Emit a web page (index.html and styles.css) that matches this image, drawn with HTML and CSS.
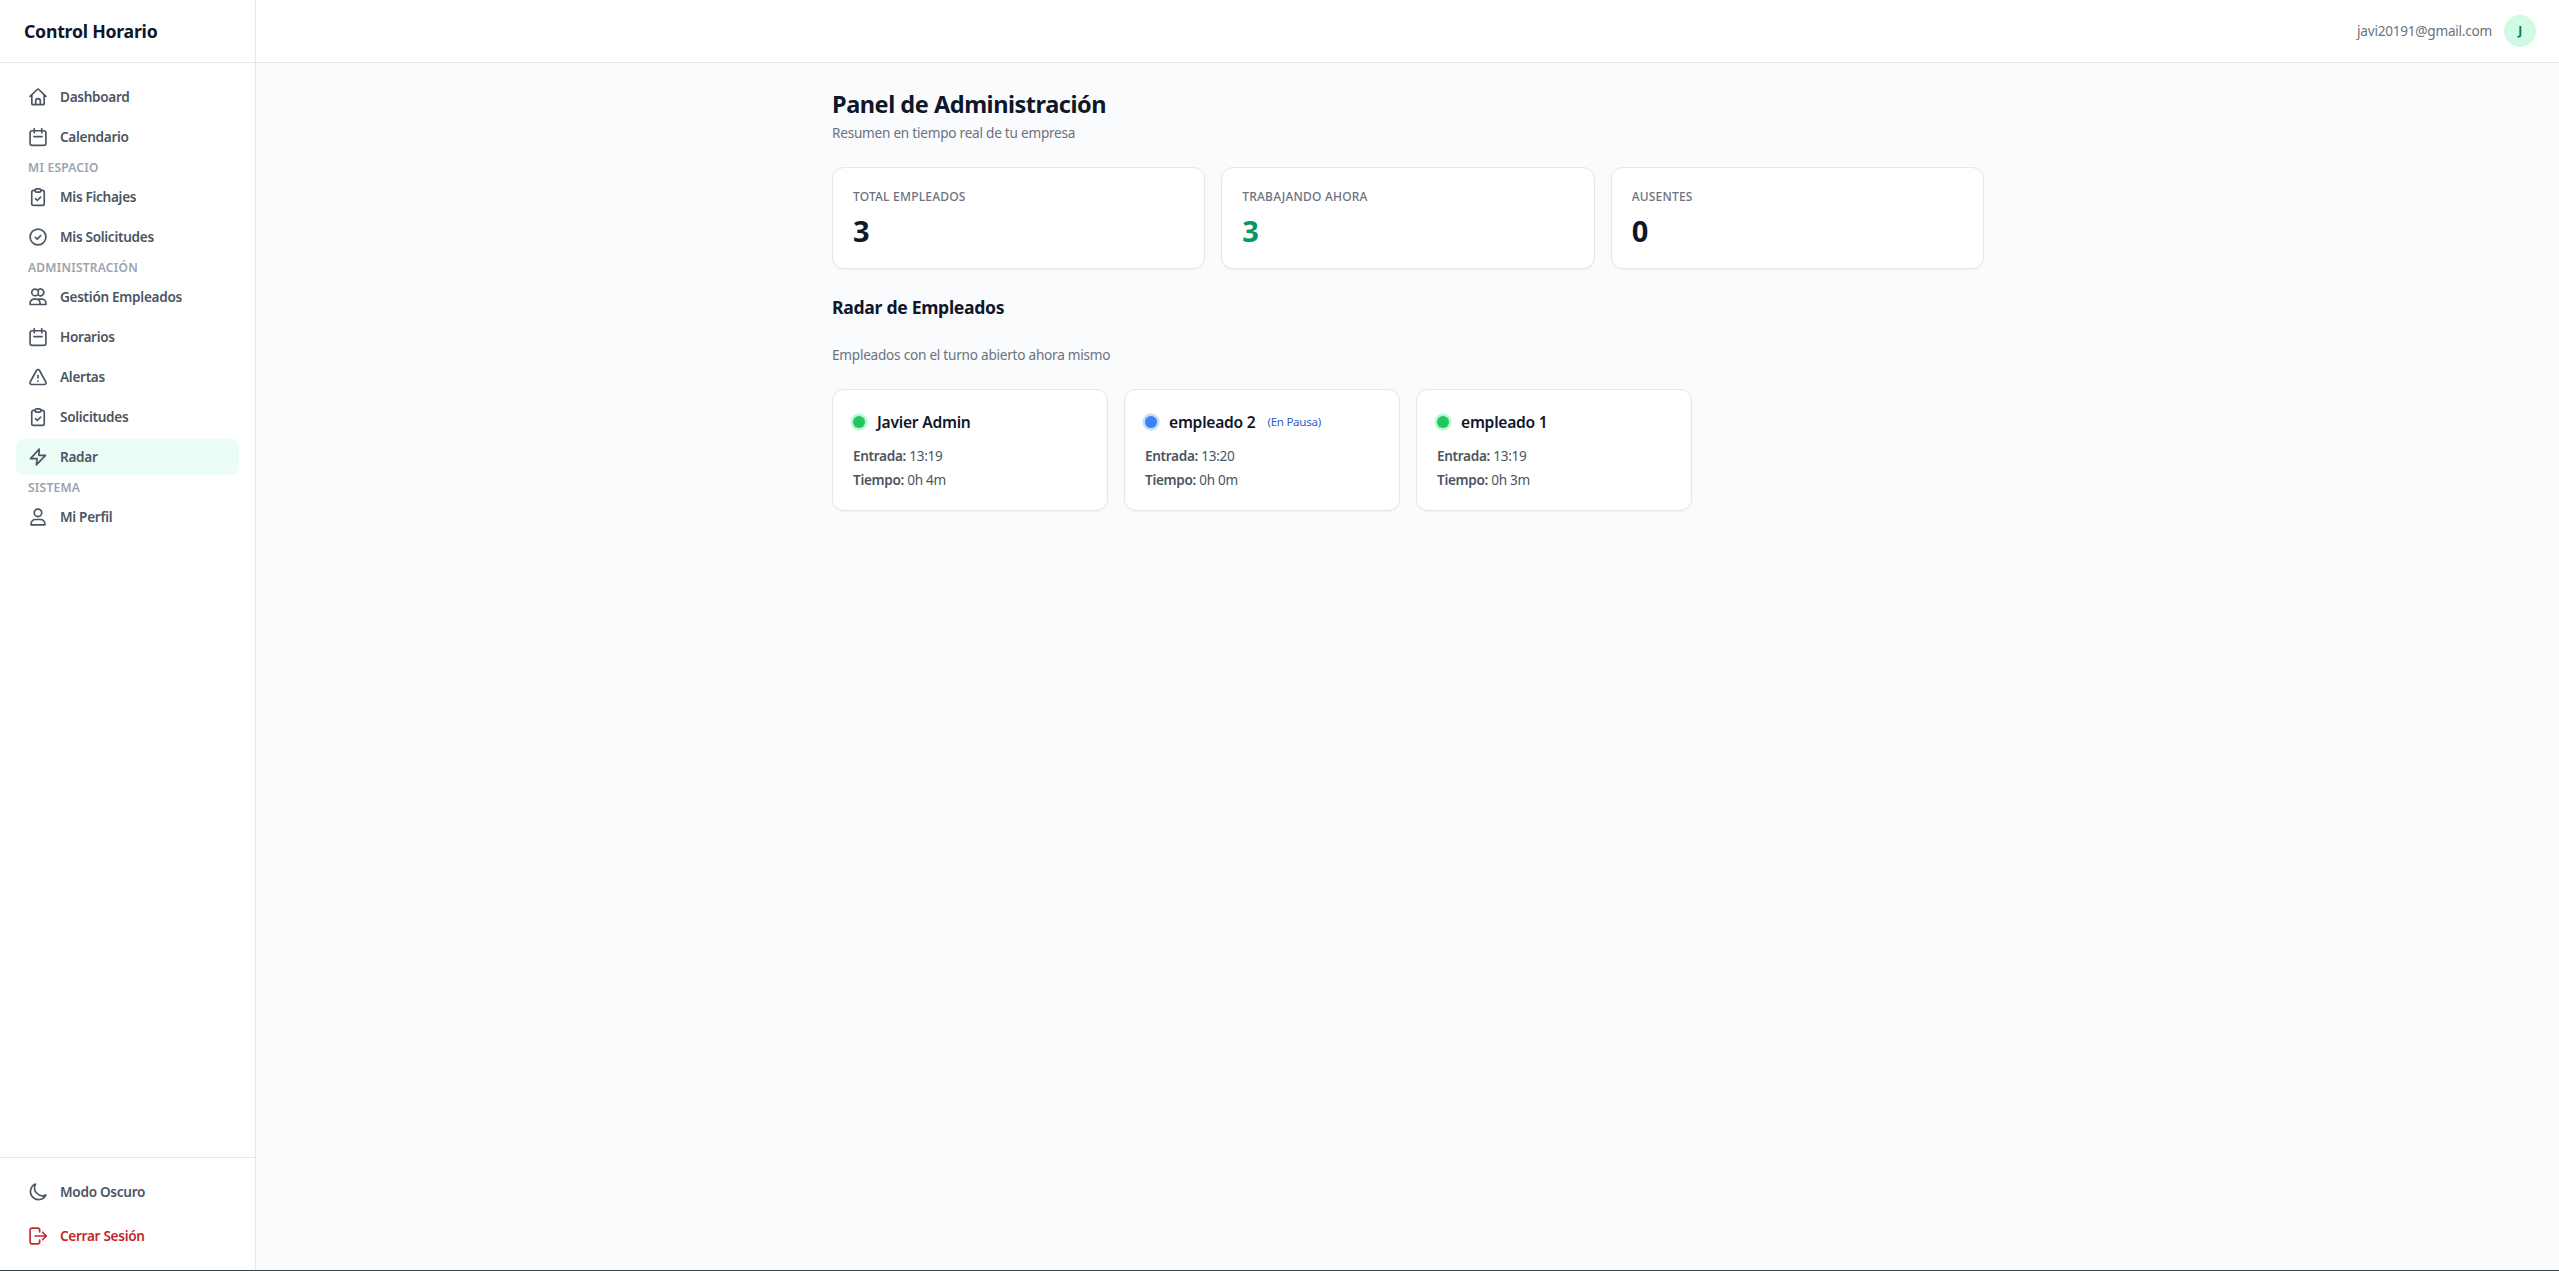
FILE: index.html
```html
<!DOCTYPE html>
<html lang="es">
<head>
  <meta charset="UTF-8">
  <meta name="viewport" content="width=device-width, initial-scale=1.0">
  <title>Control Horario</title>
  <link rel="stylesheet" href="styles.css">
</head>
<body>
  <!-- iconos compartidos -->
  <svg class="sprite" aria-hidden="true">
    <symbol id="i-home" viewBox="0 0 24 24"><path d="M2.5 11.2 11 3a1.5 1.5 0 0 1 2 0l8.500 8.200M4.600 9.500V20a1.200 1.200 0 0 0 1.200 1.200h12.400a1.200 1.200 0 0 0 1.200-1.200V9.500M9.200 21v-4.200a2.800 2.800 0 0 1 5.600 0V21"/></symbol>
    <symbol id="i-calendar" viewBox="0 0 24 24"><rect x="2.500" y="4.500" width="19" height="17.500" rx="2.500"/><path d="M7.500 2v5M16.500 2v5M7 11.500h10"/></symbol>
    <symbol id="i-clipboard" viewBox="0 0 24 24"><path d="M8.500 4H6.500a2 2 0 0 0-2 2v14a2 2 0 0 0 2 2h11a2 2 0 0 0 2-2V6a2 2 0 0 0-2-2h-2M9 14l2.200 2.200 4-4"/><rect x="8.500" y="2.200" width="7" height="4" rx="2"/></symbol>
    <symbol id="i-check" viewBox="0 0 24 24"><circle cx="12" cy="12" r="9.500"/><path d="m8.800 12.300 2.200 2.200 4.200-4.200"/></symbol>
    <symbol id="i-users" viewBox="0 0 24 24"><circle cx="8.500" cy="6.500" r="4"/><path d="M12.500 3.300a4 4 0 1 1 0 6.400M2.500 21v-1.500a5 5 0 0 1 5-5h2a5 5 0 0 1 5 5V21zM12.500 14.500h4a5 5 0 0 1 5 5V21h-7"/></symbol>
    <symbol id="i-alert" viewBox="0 0 24 24"><path d="M10.300 3.900 2.600 18a2 2 0 0 0 1.800 3h15.200a2 2 0 0 0 1.800-3L13.700 3.900a2 2 0 0 0-3.400 0zM12 10v3.200M12 16.800v.2"/></symbol>
    <symbol id="i-bolt" viewBox="0 0 24 24"><path d="M13.500 2.500 3 14h8l-1 7.500L21 10h-8z"/></symbol>
    <symbol id="i-user" viewBox="0 0 24 24"><circle cx="12" cy="7" r="4.500"/><path d="M3.800 21.500V20a5 5 0 0 1 5-5h6.400a5 5 0 0 1 5 5v1.500z"/></symbol>
    <symbol id="i-moon" viewBox="0 0 24 24"><path d="M21.500 15.500A9.700 9.700 0 1 1 9 2.500a9.500 9.500 0 0 0 12.500 13z"/></symbol>
    <symbol id="i-logout" viewBox="0 0 24 24"><path d="M14 7V5a2.500 2.500 0 0 0-2.500-2.500H5A2.500 2.500 0 0 0 2.500 5v14A2.500 2.500 0 0 0 5 21.500h6.500A2.500 2.500 0 0 0 14 19v-2M8.500 12h13M17.500 7.500 22 12l-4.500 4.500"/></symbol>
  </svg>

  <div class="app">
    <aside class="sidebar">
      <div class="brand">Control Horario</div>
      <nav class="nav">
        <a href="#" class="nav-item"><svg class="icon"><use href="#i-home"/></svg><span>Dashboard</span></a>
        <a href="#" class="nav-item"><svg class="icon"><use href="#i-calendar"/></svg><span>Calendario</span></a>
        <p class="nav-title">Mi espacio</p>
        <a href="#" class="nav-item"><svg class="icon"><use href="#i-clipboard"/></svg><span>Mis Fichajes</span></a>
        <a href="#" class="nav-item"><svg class="icon"><use href="#i-check"/></svg><span>Mis Solicitudes</span></a>
        <p class="nav-title">Administración</p>
        <a href="#" class="nav-item"><svg class="icon"><use href="#i-users"/></svg><span>Gestión Empleados</span></a>
        <a href="#" class="nav-item"><svg class="icon"><use href="#i-calendar"/></svg><span>Horarios</span></a>
        <a href="#" class="nav-item"><svg class="icon"><use href="#i-alert"/></svg><span>Alertas</span></a>
        <a href="#" class="nav-item"><svg class="icon"><use href="#i-clipboard"/></svg><span>Solicitudes</span></a>
        <a href="#" class="nav-item active"><svg class="icon"><use href="#i-bolt"/></svg><span>Radar</span></a>
        <p class="nav-title">Sistema</p>
        <a href="#" class="nav-item"><svg class="icon"><use href="#i-user"/></svg><span>Mi Perfil</span></a>
      </nav>
      <div class="sidebar-footer">
        <button class="nav-item"><svg class="icon"><use href="#i-moon"/></svg><span>Modo Oscuro</span></button>
        <button class="nav-item logout"><svg class="icon"><use href="#i-logout"/></svg><span>Cerrar Sesión</span></button>
      </div>
    </aside>

    <div class="page">
      <header class="topbar">
        <span class="email">javi20191@gmail.com</span>
        <span class="avatar">J</span>
      </header>

      <main class="content">
        <div>
          <h1>Panel de Administración</h1>
          <p class="subtitle">Resumen en tiempo real de tu empresa</p>
        </div>

        <div class="stats">
          <div class="card">
            <p class="stat-label">Total empleados</p>
            <p class="stat-value">3</p>
          </div>
          <div class="card">
            <p class="stat-label">Trabajando ahora</p>
            <p class="stat-value green">3</p>
          </div>
          <div class="card">
            <p class="stat-label">Ausentes</p>
            <p class="stat-value">0</p>
          </div>
        </div>

        <h2>Radar de Empleados</h2>
        <p class="hint">Empleados con el turno abierto ahora mismo</p>

        <div class="employees">
          <div class="card">
            <div class="employee"><span class="dot"></span><h3>Javier Admin</h3></div>
            <div class="times">
              <p><b>Entrada:</b> 13:19</p>
              <p><b>Tiempo:</b> 0h 4m</p>
            </div>
          </div>
          <div class="card">
            <div class="employee"><span class="dot paused"></span><h3>empleado 2</h3><span class="pause">(En Pausa)</span></div>
            <div class="times">
              <p><b>Entrada:</b> 13:20</p>
              <p><b>Tiempo:</b> 0h 0m</p>
            </div>
          </div>
          <div class="card">
            <div class="employee"><span class="dot"></span><h3>empleado 1</h3></div>
            <div class="times">
              <p><b>Entrada:</b> 13:19</p>
              <p><b>Tiempo:</b> 0h 3m</p>
            </div>
          </div>
        </div>
      </main>
    </div>
  </div>
</body>
</html>
```
FILE: styles.css
```css
*{
  box-sizing: border-box;
  margin: 0;
  padding: 0;
}
body{
  height: 100vh;
  overflow: hidden;
  font-family: 'Segoe UI', 'Noto Sans', 'Open Sans', sans-serif;
  font-size: 13.6px;
  line-height: 20px;
  letter-spacing: -.24px;
  color: #0f172a;
  background: #fafbfd;
  border-bottom: 1px solid #374544;
}
.sprite{
  display: none;
}
.app{
  display: flex;
  height: 100%;
}

/* barra lateral */
.sidebar{
  display: flex;
  flex-direction: column;
  width: 256px;
  background: #fff;
  border-right: 1px solid #e5e7eb;
}
.brand{
  height: 63px;
  padding: 0 24px;
  border-bottom: 1px solid #e5e7eb;
  font-size: 17.7px;
  font-weight: 700;
  line-height: 63px;
}
.nav{
  flex: 1;
  display: flex;
  flex-direction: column;
  gap: 4px;
  padding: 16px;
}
.nav-item{
  display: flex;
  align-items: center;
  gap: 12px;
  width: 100%;
  height: 36px;
  padding: 8px 12px;
  border: none;
  border-radius: 8px;
  background: none;
  color: #4b5563;
  font: inherit;
  font-weight: 600;
  letter-spacing: -.3px;
  text-decoration: none;
}
.nav-item.active{
  background: #ecfdf5;
}
.nav-item.logout{
  color: #c3272b;
}
.nav-title{
  height: 16px;
  padding: 0 12px;
  color: #9ca3af;
  font-size: 12px;
  font-weight: 600;
  line-height: 18px;
  letter-spacing: .25px;
  text-transform: uppercase;
}
.icon{
  flex: none;
  width: 20px;
  height: 20px;
  fill: none;
  stroke: currentColor;
  stroke-width: 2;
  stroke-linecap: round;
  stroke-linejoin: round;
}
.sidebar-footer{
  display: flex;
  flex-direction: column;
  gap: 8px;
  padding: 16px;
  border-top: 1px solid #e5e7eb;
}

/* cabecera */
.page{
  flex: 1;
}
.topbar{
  display: flex;
  justify-content: flex-end;
  align-items: center;
  gap: 12px;
  height: 63px;
  padding: 0 23px 0 24px;
  background: #fff;
  border-bottom: 1px solid #e5e7eb;
}
.email{
  color: #6b7280;
}
.avatar{
  width: 32px;
  height: 32px;
  border-radius: 50%;
  background: #d1fae5;
  color: #047857;
  font-size: 12px;
  font-weight: 700;
  line-height: 32px;
  text-align: center;
}

/* contenido */
.content{
  display: flex;
  flex-direction: column;
  gap: 24px;
  width: 1153px;
  margin: 0 auto;
  padding: 24px 0 0 1px;
}
h1{
  height: 32px;
  font-size: 23.5px;
  line-height: 34px;
  letter-spacing: -.46px;
}
h2{
  font-size: 17.6px;
  line-height: 28px;
  letter-spacing: -.3px;
}
h3{
  font-size: 15.6px;
  font-weight: 600;
  line-height: 24px;
}
.subtitle{
  margin-top: 4px;
  color: #6b7280;
}
.hint{
  color: #6b7280;
}
.stats{
  display: grid;
  grid-template-columns: repeat(3, 1fr);
  gap: 16px;
}
.employees{
  display: grid;
  grid-template-columns: repeat(4, 1fr);
  gap: 16px;
}
.card{
  padding: 20px;
  background: #fff;
  border: 1px solid #e5e7eb;
  border-radius: 12px;
  box-shadow: 0 1px 2px rgba(0, 0, 0, .05);
}
.stat-label{
  height: 16px;
  color: #6b7280;
  font-size: 12px;
  font-weight: 500;
  line-height: 18px;
  letter-spacing: .2px;
  text-transform: uppercase;
}
.stat-value{
  height: 36px;
  margin-top: 8px;
  font-size: 29px;
  font-weight: 700;
  line-height: 38px;
}
.stat-value.green{
  color: #059669;
}
.employee{
  display: flex;
  align-items: center;
  gap: 12px;
}
.dot{
  width: 12px;
  height: 12px;
  border-radius: 50%;
  background: #22c55e;
  box-shadow: 0 0 0 2.5px #bbf7d0;
}
.dot.paused{
  background: #3b82f6;
  box-shadow: 0 0 0 2.5px #bfdbfe;
}
.pause{
  color: #2b5fc7;
  font-size: 11.6px;
  letter-spacing: -.3px;
}
.times{
  display: flex;
  flex-direction: column;
  gap: 4px;
  margin-top: 12px;
  color: #4b5563;
  letter-spacing: -.32px;
}
.times b{
  font-weight: 600;
}
```
